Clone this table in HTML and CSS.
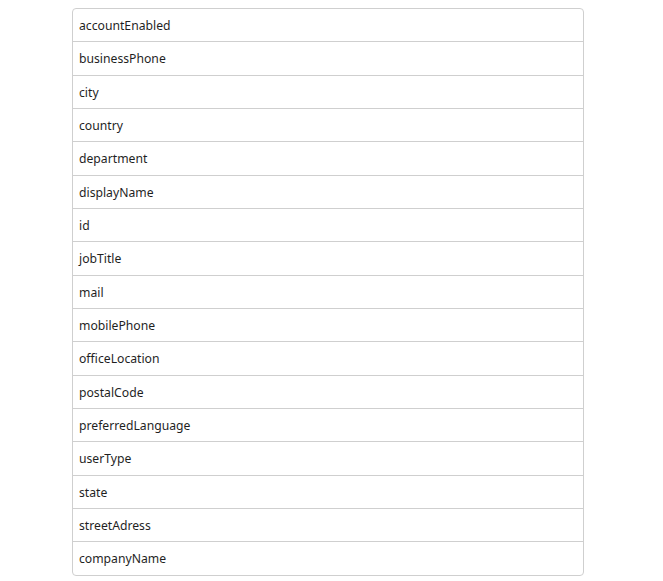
FILE: index.html
```html
<!DOCTYPE html>
<html lang="en">

<head>
    <meta charset="UTF-8">
    <meta name="viewport" content="width=device-width, initial-scale=1.0">
    <title>User properties</title>
    <link rel="stylesheet" href="styles.css">
</head>

<body>

    <main>
        <ul class="prop-list">
            <li>accountEnabled</li>
            <li>businessPhone</li>
            <li>city</li>
            <li>country</li>
            <li>department</li>
            <li>displayName</li>
            <li>id</li>
            <li>jobTitle</li>
            <li>mail</li>
            <li>mobilePhone</li>
            <li>officeLocation</li>
            <li>postalCode</li>
            <li>preferredLanguage</li>
            <li>userType</li>
            <li>state</li>
            <li>streetAdress</li>
            <li>companyName</li>
        </ul>
    </main>

</body>

</html>
```

FILE: styles.css
```css
:root {
    --border: #cfcfcf;
    --text: #1f1f1f;
}

* {
    margin: 0;
    padding: 0;
    box-sizing: border-box;
}

body {
    margin: 8px;
    background-color: white;
    color: var(--text);
    font-family: "Noto Sans", "Open Sans", sans-serif;
    font-size: 12.2px;
}

main {
    padding-left: 64px;
}

.prop-list {
    list-style: none;
    width: 512px;
    border: 1px solid var(--border);
    border-radius: 4px;
}

.prop-list li {
    padding: 7px 6px 5px;
    line-height: 20.33px;
    border-bottom: 1px solid var(--border);
}

.prop-list li:last-child {
    border-bottom: none;
}
```
